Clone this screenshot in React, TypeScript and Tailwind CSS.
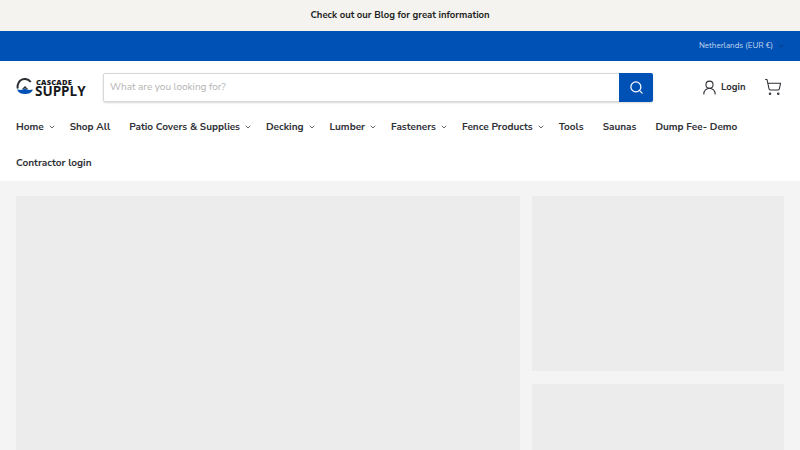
import { ChevronDown, Search, ShoppingCart, UserRound } from 'lucide-react'

const navItems = [
  { label: 'Home', menu: true, gap: 'mr-[14px]' },
  { label: 'Shop All', menu: false, gap: 'mr-[19px]' },
  { label: 'Patio Covers & Supplies', menu: true, gap: 'mr-[14px]' },
  { label: 'Decking', menu: true, gap: 'mr-[14px]' },
  { label: 'Lumber', menu: true, gap: 'mr-[14px]' },
  { label: 'Fasteners', menu: true, gap: 'mr-[14px]' },
  { label: 'Fence Products', menu: true, gap: 'mr-[14px]' },
  { label: 'Tools', menu: false, gap: 'mr-[19px]' },
  { label: 'Saunas', menu: false, gap: 'mr-[19px]' },
  { label: 'Dump Fee- Demo', menu: false, gap: 'mr-[40px]' },
]

function Logo() {
  return (
    <div className="flex items-center w-[71px] h-[20px] shrink-0">
      <svg width="18" height="18" viewBox="0 0 18 18" className="shrink-0">
        <path d="M14.8 4 A7.2 7.2 0 0 0 2.4 5.2 A7.4 7.4 0 0 0 1.8 10.5" fill="none" stroke="#2b2f36" strokeWidth="2" />
        <path d="M5.5 11.5 L9 8 L12.5 11.5 L9 10.5 Z" fill="#2b2f36" />
        <path d="M1 11.5 L5 12 L9 10.8 L13 12 L17 11.5 A8.4 6.5 0 0 1 1 11.5 Z" fill="#0051b5" />
      </svg>
      <div className="ml-[1px] flex flex-col font-['Open_Sans',sans-serif] text-[#17191d]">
        <span className="text-[7.5px] leading-[8px] font-extrabold tracking-[0.2px] ml-[1px]">CASCADE</span>
        <span className="text-[13.5px] leading-[11px] font-bold">SUPPLY</span>
      </div>
    </div>
  )
}

export default function App() {
  return (
    <div className="h-[450px] w-[800px] overflow-hidden bg-[#f4f4f4] font-['Nunito_Sans','Lato',sans-serif] text-[#2f3137]">
      {/* Announcement */}
      <div className="h-[31px] bg-[#f4f3ef] flex items-center justify-center text-[9.5px] font-bold text-[#1d1f23]">
        Check out our Blog for great information
      </div>

      {/* Blue utility bar */}
      <div className="h-[30px] bg-[#0051b5] flex items-center justify-end pr-[15px] text-[8px] text-[#c3d6ee]">
        Netherlands (EUR €)
        <ChevronDown size={8} strokeWidth={2} className="ml-[4px] text-[#0c2f66]" />
      </div>

      <div className="bg-white h-[120px]">
        {/* Logo, search, account */}
        <div className="h-[52px] flex items-center pl-[16px]">
          <Logo />
          <div className="ml-[16px] w-[550px] h-[29px] flex rounded-[2px] border border-[#d8d8d8] shadow-[0_1px_2px_rgba(0,0,0,0.15)]">
            <div className="flex-1 flex items-center pl-[6px] text-[10px] text-[#b4b4b4]">What are you looking for?</div>
            <div className="w-[34px] -my-px -mr-px bg-[#0051b5] rounded-r-[2px] flex items-center justify-center">
              <Search size={15} strokeWidth={2} className="text-white" />
            </div>
          </div>
          <UserRound size={17} strokeWidth={1.5} className="ml-[48px]" />
          <span className="ml-[3px] text-[9.5px] font-bold">Login</span>
          <ShoppingCart size={18} strokeWidth={1.4} className="ml-[19px]" />
        </div>

        {/* Navigation */}
        <nav className="-mt-1 flex flex-wrap pl-[16px] text-[10px] font-bold">
          {navItems.map((item) => (
            <div key={item.label} className={`h-[36px] flex items-center ${item.gap}`}>
              {item.label}
              {item.menu && <ChevronDown size={8} strokeWidth={2.2} className="ml-[4px]" />}
            </div>
          ))}
          <div className="h-[36px] flex items-center">Contractor login</div>
        </nav>
      </div>

      {/* Loading placeholders */}
      <div className="mt-[15px] px-[16px] flex gap-[12px]">
        <div className="w-[504px] h-[300px] bg-[#ececec]" />
        <div className="w-[252px] flex flex-col gap-[13px]">
          <div className="h-[175px] bg-[#ececec]" />
          <div className="h-[175px] bg-[#ececec]" />
        </div>
      </div>
    </div>
  )
}
